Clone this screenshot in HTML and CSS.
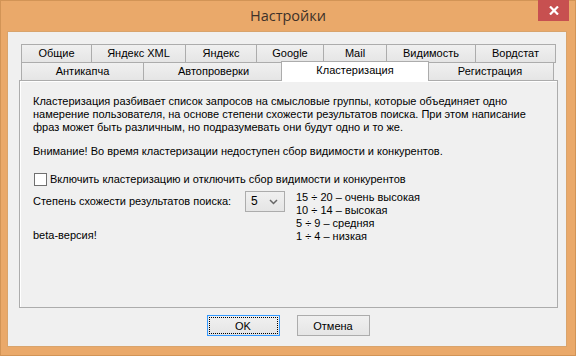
FILE: index.html
```html
<!DOCTYPE html>
<html lang="ru">
<head>
    <meta charset="UTF-8">
    <meta name="viewport" content="width=device-width, initial-scale=1.0">
    <title>Настройки</title>
    <link rel="stylesheet" href="styles.css">
</head>
<body>
    <div class="window">
        <div class="titlebar">
            <span class="title">Настройки</span>
            <div class="close">
                <svg width="10" height="9" viewBox="0 0 10 9">
                    <path d="M1 0.5 L9 8.5 M9 0.5 L1 8.5" stroke="#fff" stroke-width="2.2"/>
                </svg>
            </div>
        </div>
        <div class="client">
            <div class="tabs">
                <ul class="row">
                    <li style="width:71px">Общие</li>
                    <li style="width:95px">Яндекс XML</li>
                    <li style="width:72px">Яндекс</li>
                    <li style="width:68px">Google</li>
                    <li style="width:64px">Mail</li>
                    <li style="width:90px">Видимость</li>
                    <li style="width:81px">Вордстат</li>
                </ul>
                <ul class="row">
                    <li style="width:123px">Антикапча</li>
                    <li style="width:141px">Автопроверки</li>
                    <li class="active" style="width:148px">Кластеризация</li>
                    <li style="width:128px">Регистрация</li>
                </ul>
            </div>
            <div class="panel">
                <p class="intro">Кластеризация разбивает список запросов на смысловые группы, которые объединяет одно намерение пользователя, на основе степени схожести результатов поиска. При этом написание фраз может быть различным, но подразумевать они будут одно и то же.</p>
                <p class="warn">Внимание! Во время кластеризации недоступен сбор видимости и конкурентов.</p>
                <label class="check">
                    <span class="box"></span>
                    Включить кластеризацию и отключить сбор видимости и конкурентов
                </label>
                <div class="similar">
                    <div class="left">
                        <div class="level">
                            <span class="caption">Степень схожести результатов поиска:</span>
                            <div class="combo">
                                <span>5</span>
                                <svg width="9" height="6" viewBox="0 0 9 6">
                                    <path d="M1 1 L4.5 4.5 L8 1" fill="none" stroke="#666" stroke-width="1.5"/>
                                </svg>
                            </div>
                        </div>
                        <div class="beta">beta-версия!</div>
                    </div>
                    <ul class="scale">
                        <li>15 ÷ 20 – очень высокая</li>
                        <li>10 ÷ 14 – высокая</li>
                        <li>5 ÷ 9 – средняя</li>
                        <li>1 ÷ 4 – низкая</li>
                    </ul>
                </div>
            </div>
            <div class="buttons">
                <div class="btn default"><span>OK</span></div>
                <div class="btn">Отмена</div>
            </div>
        </div>
    </div>
</body>
</html>
```

FILE: styles.css
```css
* {
    margin: 0;
    padding: 0;
    box-sizing: border-box;
}

ul {
    list-style: none;
}

body {
    font-family: "Liberation Sans", Arial, sans-serif;
    font-size: 11px;
    color: #000;
}

.window {
    width: 576px;
    height: 356px;
    background-color: #eaa96a;
    border: 1px solid #d29456;
    display: flex;
    flex-direction: column;
}

.titlebar {
    position: relative;
    height: 30px;
    display: flex;
    justify-content: center;
    align-items: center;
}

.title {
    font-family: "Open Sans", "Noto Sans", sans-serif;
    font-size: 14.5px;
    color: #3d3129;
    margin-top: -1px;
}

.close {
    position: absolute;
    right: 6px;
    top: -1px;
    width: 31px;
    height: 21px;
    background-color: #c75050;
    display: flex;
    justify-content: center;
    align-items: center;
}

.client {
    margin: 0 8px 8px 6px;
    height: 316px;
    background-color: #f0f0f0;
    border: 1px solid #d9a46c;
    padding: 12px 0 0 11px;
}

.tabs {
    margin-left: 2px;
}

.tabs .row {
    display: flex;
    height: 18px;
}

.tabs li {
    height: 19px;
    margin-right: -1px;
    border: 1px solid #acacac;
    background: linear-gradient(#f0f0f0, #e5e5e5);
    text-align: center;
    line-height: 16px;
}

.tabs .active {
    position: relative;
    z-index: 1;
    height: 20px;
    margin: -1px -3px 0 -2px;
    border-bottom: none;
    background: #fff;
}

.panel {
    width: 539px;
    height: 228px;
    border: 1px solid #acacac;
    box-shadow: inset 1px 1px 0 #fff;
    padding: 14px 13px 0 13px;
    line-height: 13px;
}

.intro {
    width: 505px;
}

.warn {
    margin-top: 11px;
}

.check {
    display: flex;
    align-items: center;
    gap: 3px;
    margin-top: 15px;
    margin-left: 1px;
}

.check .box {
    width: 13px;
    height: 13px;
    border: 1px solid #707070;
    background: #fff;
}

.similar {
    display: flex;
    gap: 11px;
    margin-top: 5px;
}

.level {
    display: flex;
    align-items: center;
    gap: 9px;
}

.caption {
    width: 203px;
    margin-top: -1px;
}

.combo {
    width: 40px;
    height: 21px;
    border: 1px solid #acacac;
    background: linear-gradient(#f0f0f0, #e5e5e5);
    display: flex;
    align-items: center;
    justify-content: space-between;
    padding: 0 6px 0 5px;
    font-size: 12px;
}

.beta {
    margin-top: 17px;
}

.scale li {
    height: 13px;
}

.buttons {
    display: flex;
    justify-content: center;
    gap: 17px;
    margin-top: 7px;
    margin-left: -9px;
}

.btn {
    width: 73px;
    height: 21px;
    border: 1px solid #acacac;
    background: linear-gradient(#f0f0f0, #e5e5e5);
    display: flex;
    align-items: center;
    justify-content: center;
}

.btn.default {
    border-color: #3399ff;
    padding: 1px;
}

.btn.default span {
    width: 100%;
    height: 100%;
    border: 1px dotted #000;
    display: flex;
    align-items: center;
    justify-content: center;
}
```
